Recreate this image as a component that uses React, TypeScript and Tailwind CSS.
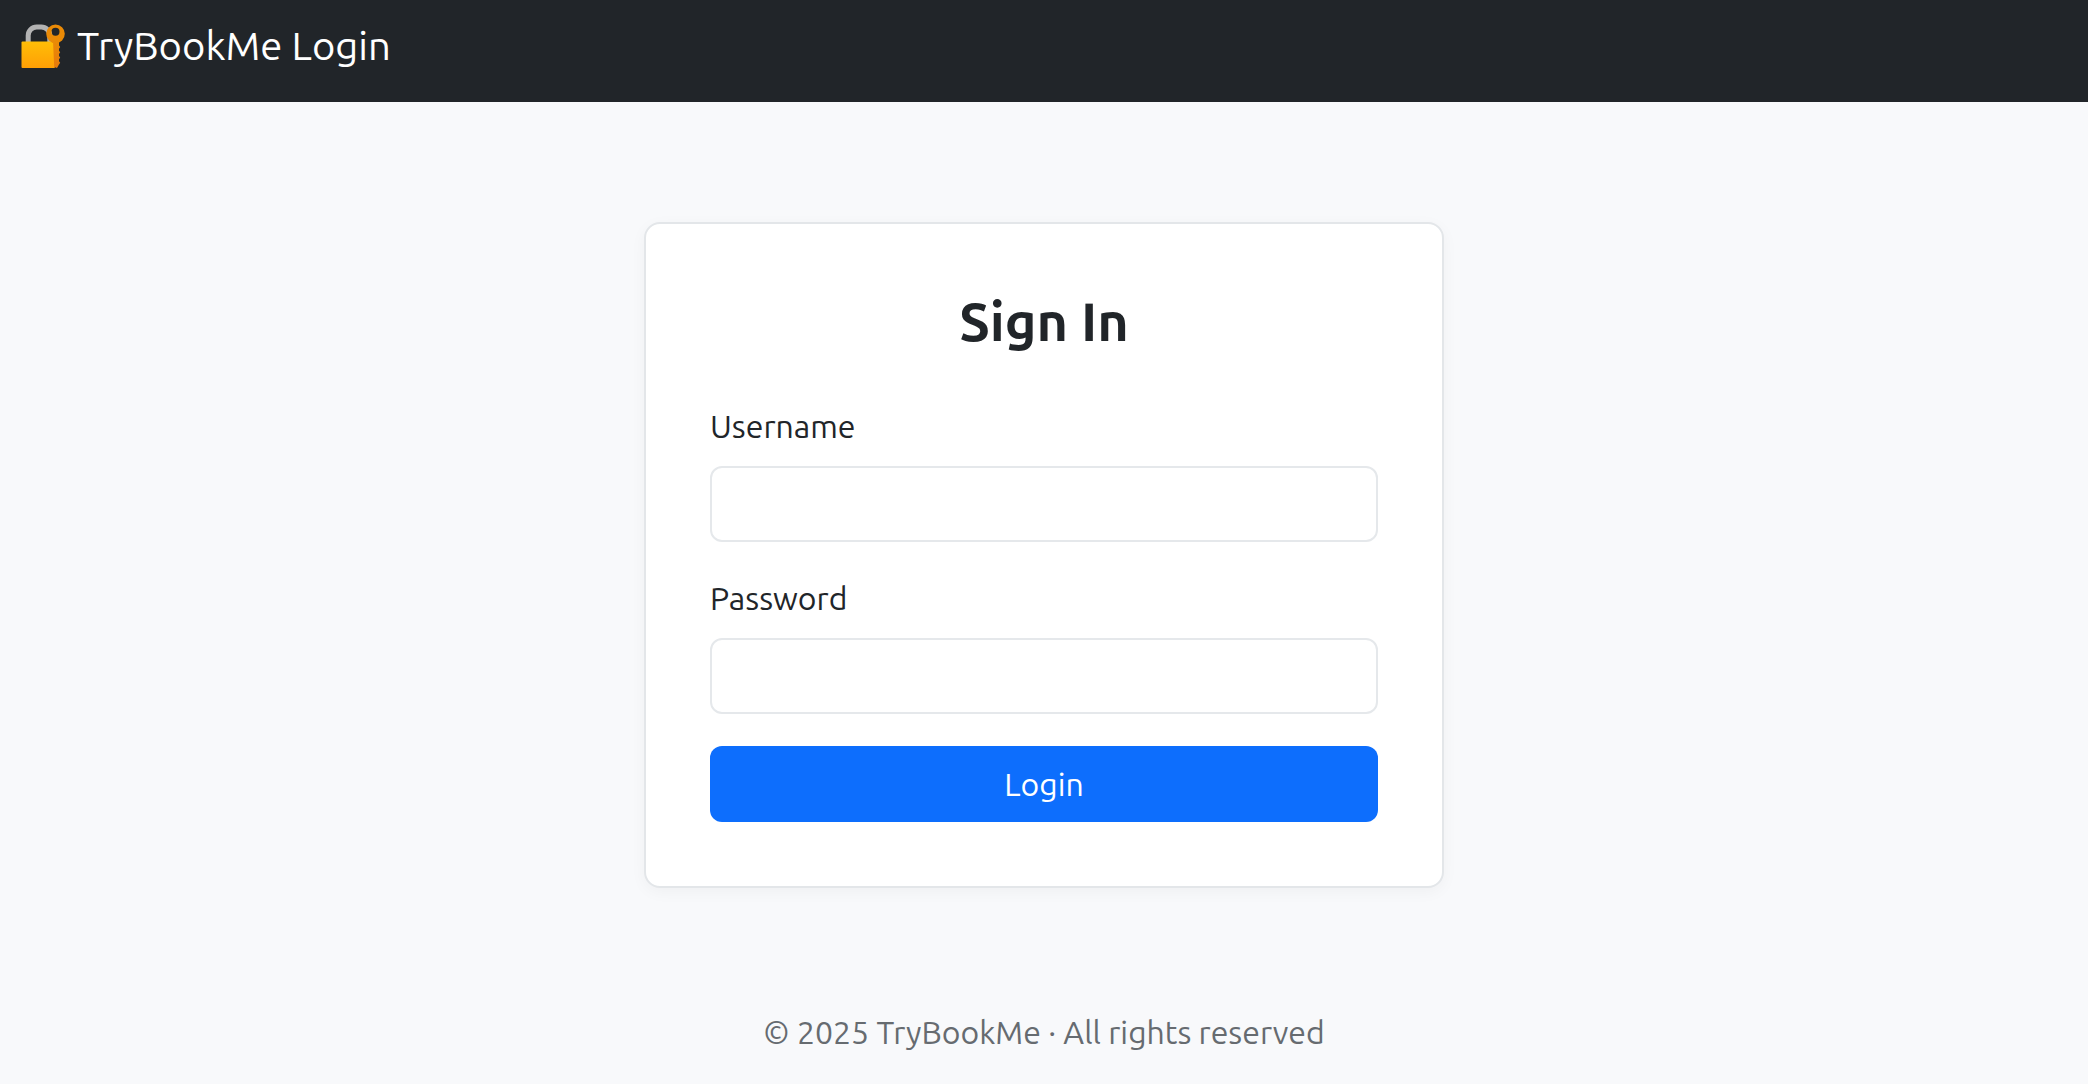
function LockWithKey() {
  return (
    <svg viewBox="0 0 44 45" className="h-[45px] w-11 shrink-0" aria-hidden="true">
      <defs>
        <linearGradient id="lockBody" x1="0" y1="0" x2="0" y2="1">
          <stop offset="0" stopColor="#ffbe07" />
          <stop offset="1" stopColor="#ff9f05" />
        </linearGradient>
        <linearGradient id="keyBody" x1="0" y1="0" x2="0" y2="1">
          <stop offset="0" stopColor="#ea8a06" />
          <stop offset="1" stopColor="#e67a0c" />
        </linearGradient>
      </defs>
      <path d="M7.2 20v-8.5A8.5 8.5 0 0 1 15.700 3h4.600a8.500 8.500 0 0 1 8.500 8.500V20" fill="none" stroke="#b3b3b3" strokeWidth="5" />
      <rect x="0.500" y="17.500" width="33.500" height="26.500" rx="1" fill="url(#lockBody)" />
      <path d="M32 17h6v4.500l1.200 1.500-1.200 1.700v2l1.200 1.500-1.200 1.700v2.100l1.200 1.500-1.200 1.700v2l1.200 1.600-1.200 1.700-2 3.500-2.800-1z" fill="url(#keyBody)" />
      <path fillRule="evenodd" d="M34.500 0.500a9.300 9.300 0 1 1 0 18.600a9.300 9.300 0 0 1 0-18.600zM34.500 3.700a4 4 0 1 0 0 8a4 4 0 0 0 0-8z" fill="#ea8a06" />
    </svg>
  );
}

function Field({ id, label, type }: { id: string; label: string; type: string }) {
  return (
    <div className="mb-8">
      <label htmlFor={id} className="mb-4 block">
        {label}
      </label>
      <input
        id={id}
        name={id}
        type={type}
        className="block h-[76px] w-full rounded-xl border-2 border-[#e5e8eb] bg-white px-6 outline-none focus:border-[#86b7fe]"
      />
    </div>
  );
}

export default function App() {
  return (
    <div className="flex min-h-screen flex-col bg-[#f8f9fb] font-['Ubuntu','Noto_Sans',sans-serif] text-[32px] leading-[48px] text-[#212529]">
      <header className="flex bg-[#212529] px-[21px] pt-4 pb-[26px]">
        <a href="#" className="flex items-center gap-3 text-[40px] leading-[60px] text-white">
          <LockWithKey />
          TryBookMe Login
        </a>
      </header>

      <main className="flex justify-center px-6 pt-[120px]">
        <form
          onSubmit={(event) => event.preventDefault()}
          className="w-full max-w-[800px] rounded-2xl border-2 border-[#e3e6e9] bg-white p-16 shadow-[0_4px_16px_rgba(0,0,0,0.04)]"
        >
          <h1 className="mb-12 text-center text-[54px] leading-[66px] font-semibold">Sign In</h1>
          <Field id="username" label="Username" type="text" />
          <Field id="password" label="Password" type="password" />
          <button
            type="submit"
            className="block h-[76px] w-full rounded-xl bg-[#0d6efd] text-center text-white"
          >
            Login
          </button>
        </form>
      </main>

      <footer className="mt-[120px] px-6 text-center text-[#666b70]">
        © 2025 TryBookMe · All rights reserved
      </footer>
    </div>
  );
}
